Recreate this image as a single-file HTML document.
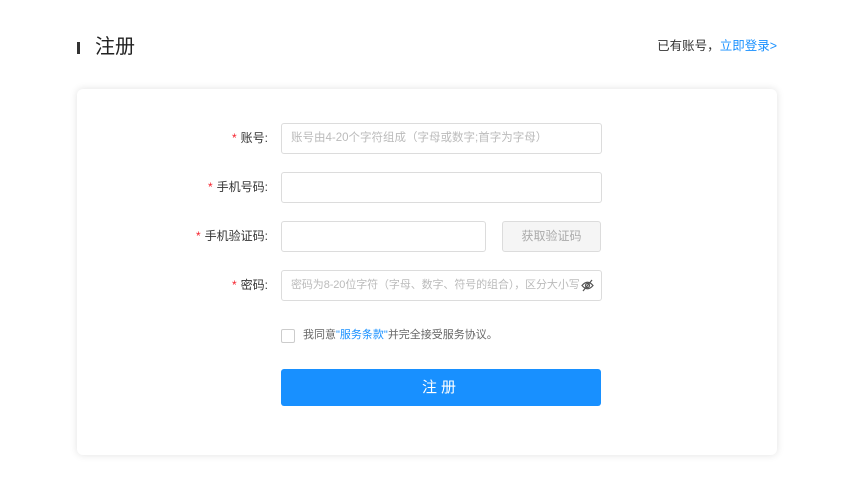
<!DOCTYPE html>
<html><head><meta charset="utf-8"><style>
body{margin:0;width:860px;height:485px;background:#fff;font-family:"Liberation Sans","Noto Sans CJK SC",sans-serif;position:relative;overflow:hidden;color:#333}
.a{position:absolute}
.bar{left:77px;top:42px;width:3px;height:12px;background:#333}
.title{left:95px;top:34px;font-size:20px;line-height:26px;color:#222}
.login{right:83px;top:37px;font-size:12.5px;line-height:18px;color:#333}
.login span{color:#1890ff}
.card{left:77px;top:89px;width:700px;height:366px;border-radius:6px;box-shadow:0 0 8px rgba(0,0,0,.12);background:#fff}
.lab{font-size:12px;color:#333;text-align:right;width:150px;left:118px;line-height:16px}
.lab i{color:#f5222d;font-style:normal;margin-right:4px}
.inp{border:1px solid #dcdcdc;border-radius:3px;box-sizing:border-box;height:31px;font-size:11.5px;color:#bbb;line-height:29px;padding-left:9px;white-space:nowrap;overflow:hidden}
.btn2{left:502px;top:221px;width:99px;height:31px;box-sizing:border-box;border:1px solid #dcdcdc;background:#f5f5f5;border-radius:3px;color:#aaa;font-size:12px;text-align:center;line-height:29px}
.cb{left:281px;top:329px;width:12px;height:12px;border:1px solid #ccc;border-radius:2px}
.agree{left:303px;top:327px;font-size:11px;color:#666;line-height:16px}
.agree span{color:#1890ff}
.reg{left:281px;top:369px;width:320px;height:37px;background:#1890ff;border-radius:3px;color:#fff;font-size:15px;text-align:center;line-height:37px;letter-spacing:4px}
</style></head><body>
<div class="a bar"></div>
<div class="a title">注册</div>
<div class="a login">已有账号，<span>立即登录&gt;</span></div>
<div class="a card"></div>
<div class="a lab" style="top:130px"><i>*</i>账号:</div>
<div class="a inp" style="left:281px;top:123px;width:321px">账号由4-20个字符组成（字母或数字;首字为字母）</div>
<div class="a lab" style="top:179px"><i>*</i>手机号码:</div>
<div class="a inp" style="left:281px;top:172px;width:321px"></div>
<div class="a lab" style="top:228px"><i>*</i>手机验证码:</div>
<div class="a inp" style="left:281px;top:221px;width:205px"></div>
<div class="a btn2">获取验证码</div>
<div class="a lab" style="top:277px"><i>*</i>密码:</div>
<div class="a inp" style="left:281px;top:270px;width:321px;padding-right:24px;font-size:11px;letter-spacing:-0.1px">密码为8-20位字符（字母、数字、符号的组合），区分大小写</div>
<svg class="a" style="left:581px;top:279px" width="13" height="13" viewBox="0 0 13 13"><path d="M1 6.5Q6.5 0 12 6.5Q6.5 13 1 6.5Z" fill="none" stroke="#555" stroke-width="1.2"/><circle cx="6.5" cy="6.5" r="2" fill="none" stroke="#555" stroke-width="1.2"/><path d="M2 12L11 1" stroke="#555" stroke-width="1.2"/></svg>
<div class="a cb"></div>
<div class="a agree">我同意<span>"服务条款"</span>并完全接受服务协议。</div>
<div class="a reg">注册</div>
</body></html>
